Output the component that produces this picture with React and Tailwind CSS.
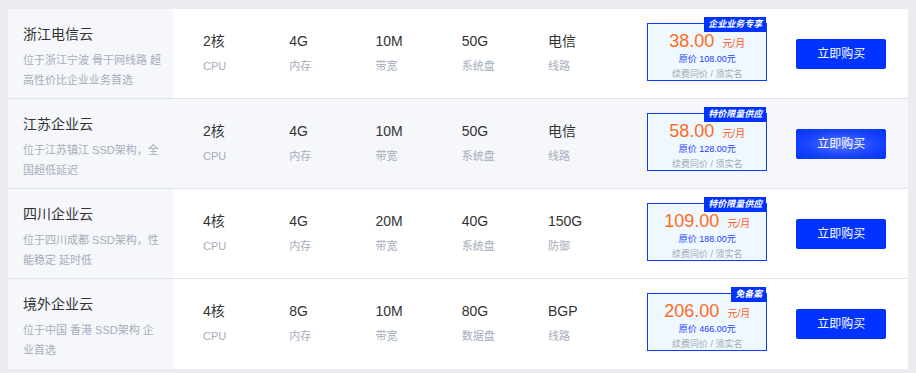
import React from "react";

const rows = [
  {
    title: "浙江电信云",
    desc: "位于浙江宁波 骨干网线路 超高性价比企业业务首选",
    specs: [["2核", "CPU"], ["4G", "内存"], ["10M", "带宽"], ["50G", "系统盘"], ["电信", "线路"]],
    price: "38.00",
    orig: "108.00",
    badge: "企业业务专享",
  },
  {
    title: "江苏企业云",
    desc: "位于江苏镇江 SSD架构，全国超低延迟",
    specs: [["2核", "CPU"], ["4G", "内存"], ["10M", "带宽"], ["50G", "系统盘"], ["电信", "线路"]],
    price: "58.00",
    orig: "128.00",
    badge: "特价限量供应",
    hover: true,
  },
  {
    title: "四川企业云",
    desc: "位于四川成都 SSD架构，性能稳定 延时低",
    specs: [["4核", "CPU"], ["4G", "内存"], ["20M", "带宽"], ["40G", "系统盘"], ["150G", "防御"]],
    price: "109.00",
    orig: "188.00",
    badge: "特价限量供应",
  },
  {
    title: "境外企业云",
    desc: "位于中国 香港 SSD架构 企业首选",
    specs: [["4核", "CPU"], ["8G", "内存"], ["10M", "带宽"], ["80G", "数据盘"], ["BGP", "线路"]],
    price: "206.00",
    orig: "466.00",
    badge: "免备案",
    last: true,
  },
];

function Row({ r }) {
  return (
    <div
      className={
        "flex h-[90px] " +
        (r.last ? "" : "border-b border-[#dfe3ea] ") +
        (r.hover ? "bg-[#f5f7fa]" : "bg-white")
      }
    >
      <div className="w-[165px] h-full bg-[#f5f7fa] pt-[15px] pl-[15px] pr-[10px] shrink-0">
        <div className="text-[14px] leading-[20px] text-[#333]">{r.title}</div>
        <div className="mt-[6px] text-[11px] leading-[20px] text-[#a6adbc]">{r.desc}</div>
      </div>
      <div className="flex pl-[30px] self-start mt-[22px]">
        {r.specs.map(([v, l], i) => (
          <div key={i} className="w-[86.25px]">
            <div className="text-[14px] leading-[20px] text-[#333]">{v}</div>
            <div className="mt-[5px] text-[11px] leading-[20px] text-[#a6adbc]">{l}</div>
          </div>
        ))}
      </div>
      <div className="relative ml-[13px] self-start mt-[14px] w-[120px] h-[58px] border border-[#0a3bff] bg-[#eff8ff] flex flex-col items-center pt-[7px]">
        <div className="absolute right-0 top-[-7px] h-[15px] bg-[#0033ff] px-[4px] text-[9px] leading-[15px] font-bold italic text-white whitespace-nowrap">
          {r.badge}
        </div>
        <div className="flex items-baseline leading-[20px] whitespace-nowrap">
          <span className="text-[18px] text-[#ff6a1c]">{r.price}</span>
          <span className="ml-[8px] text-[10px] text-[#ff5a1a]">元/月</span>
        </div>
        <div className="mt-[-1px] text-[9px] leading-[12px] text-[#1a3cff] whitespace-nowrap">原价 {r.orig}元</div>
        <div className="mt-[2px] text-[9px] leading-[14px] text-[#a3a8b4] whitespace-nowrap">续费同价 / 须实名</div>
      </div>
      <button
        className={
          "ml-[29px] self-start mt-[30px] w-[90px] h-[30px] rounded-[2px] text-[12px] text-white " +
          (r.hover
            ? "bg-[radial-gradient(ellipse_at_center,#5c7bff_0%,#1a45ff_55%,#0033ff_100%)]"
            : "bg-[#0033ff]")
        }
      >
        立即购买
      </button>
    </div>
  );
}

export default function App() {
  return (
    <div
      className="w-[916px] h-[373px] bg-[#eaecef] pt-[9px] pl-[8px]"
      style={{ fontFamily: '"Liberation Sans", "Noto Sans CJK SC", sans-serif' }}
    >
      <div className="w-[900px] bg-white">
        {rows.map((r, i) => (
          <Row key={i} r={r} />
        ))}
      </div>
    </div>
  );
}
